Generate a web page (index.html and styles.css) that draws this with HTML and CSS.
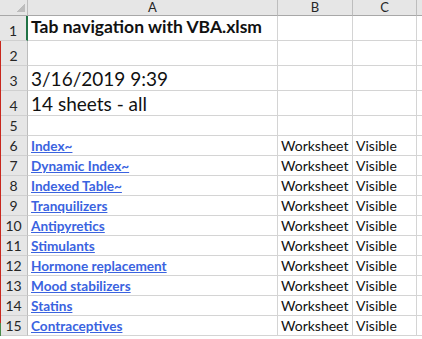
FILE: index.html
```html
<!DOCTYPE html>
<html lang="en">

<head>
    <meta charset="UTF-8">
    <title>Tab navigation with VBA.xlsm</title>
    <link rel="stylesheet" href="styles.css">
</head>

<body>
    <div class="sheet">
        <div class="corner"></div>
        <div class="colhead">A</div>
        <div class="colhead">B</div>
        <div class="colhead">C</div>
        <div class="colhead"></div>

        <div class="rowhead selected">1</div>
        <div class="cell title">Tab navigation with VBA.xlsm</div>
        <div class="cell"></div>
        <div class="cell"></div>
        <div class="cell"></div>

        <div class="rowhead">2</div>
        <div class="cell"></div>
        <div class="cell"></div>
        <div class="cell"></div>
        <div class="cell"></div>

        <div class="rowhead">3</div>
        <div class="cell big">3/16/2019 9:39</div>
        <div class="cell"></div>
        <div class="cell"></div>
        <div class="cell"></div>

        <div class="rowhead">4</div>
        <div class="cell big">14 sheets - all</div>
        <div class="cell"></div>
        <div class="cell"></div>
        <div class="cell"></div>

        <div class="rowhead">5</div>
        <div class="cell"></div>
        <div class="cell"></div>
        <div class="cell"></div>
        <div class="cell"></div>
    </div>
    <script>
        // sheet list
        var sheets = ['Index~', 'Dynamic Index~', 'Indexed Table~', 'Tranquilizers', 'Antipyretics',
            'Stimulants', 'Hormone replacement', 'Mood stabilizers', 'Statins', 'Contraceptives'];
        var grid = document.querySelector('.sheet');
        sheets.forEach(function (name, i) {
            grid.insertAdjacentHTML('beforeend',
                '<div class="rowhead">' + (i + 6) + '</div>' +
                '<div class="cell"><a href="#" class="link">' + name + '</a></div>' +
                '<div class="cell">Worksheet</div>' +
                '<div class="cell">Visible</div>' +
                '<div class="cell"></div>');
        });
    </script>
</body>

</html>
```

FILE: styles.css
```css
body {
    margin: 0;
    background: #fff;
    font-family: Lato, "Liberation Sans", sans-serif;
    overflow: hidden;
}

.sheet {
    position: relative;
    display: grid;
    grid-template-columns: 28px 250px 75px 64px 1fr;
    grid-template-rows: 16px 25px 25px 25px 25px repeat(11, 20px);
    width: 100%;
}

.sheet::before {
    content: "";
    position: absolute;
    left: 0;
    top: 41px;
    width: 1px;
    height: 282px;
    background: #c8281e;
}

.sheet::after {
    content: "";
    position: absolute;
    left: 0;
    top: 323px;
    width: 1px;
    height: 20px;
    background: #4a8a4a;
}

.corner,
.colhead,
.rowhead {
    background: #e6e6e6;
    color: #262626;
    box-sizing: border-box;
}

.corner {
    border-right: 1px solid #bdbdbd;
    border-bottom: 1px solid #a8a8a8;
    background: #e6e6e6 linear-gradient(135deg, transparent 62%, #bdbdbd 62%) no-repeat 14px 1px / 11px 11px;
}

.colhead {
    border-right: 1px solid #bdbdbd;
    border-bottom: 1px solid #a8a8a8;
    font-size: 13px;
    line-height: 15px;
    text-align: center;
    overflow: hidden;
}

.rowhead {
    border-right: 1px solid #bdbdbd;
    border-bottom: 1px solid #d0d0d0;
    font-size: 14px;
    display: flex;
    align-items: flex-end;
    justify-content: center;
    padding-bottom: 1px;
}

.rowhead.selected {
    border-right: 2px solid #217346;
}

.cell {
    border-right: 1px solid #d4d4d4;
    border-bottom: 1px solid #d4d4d4;
    box-sizing: border-box;
    font-size: 14px;
    color: #111;
    padding: 0 3px 1px;
    white-space: nowrap;
    display: flex;
    align-items: flex-end;
}

.title {
    font-size: 17.5px;
    font-weight: bold;
    padding-bottom: 3px;
}

.big {
    font-size: 19px;
    padding-bottom: 0;
}

.link {
    color: #3a63e0;
    font-weight: bold;
    font-size: 13.6px;
    text-decoration: underline;
}
```
